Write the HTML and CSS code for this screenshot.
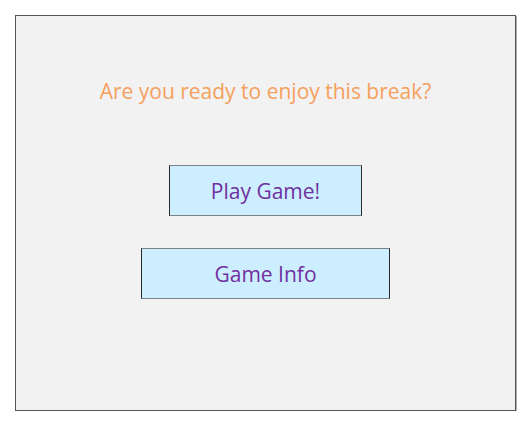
FILE: index.html
```html
<!DOCTYPE html>
<html>
<head>
<meta charset="utf-8">
<link rel="stylesheet" href="styles.css">
</head>
<body>
<div class="frame">
  <p class="title">Are you ready to enjoy this break?</p>
  <div class="buttons">
    <button class="btn btn-play">Play Game!</button>
    <button class="btn btn-info">Game Info</button>
  </div>
</div>
</body>
</html>
```

FILE: styles.css
```css
html, body {
  margin: 0;
  padding: 0;
  background: #ffffff;
}
.frame {
  box-sizing: border-box;
  margin: 15px 0 0 15px;
  width: 501px;
  height: 396px;
  background: #f2f2f2;
  border: 1px solid #555555;
  box-shadow: 1px 1px 0 #b0b0b0;
  display: flex;
  flex-direction: column;
  align-items: center;
  font-family: "Open Sans", "Noto Sans", sans-serif;
}
.title {
  margin: 62px 0 0 0;
  font-size: 21px;
  line-height: 26px;
  color: #f5a05c;
}
.buttons {
  margin-top: 61px;
  display: flex;
  flex-direction: column;
  align-items: center;
  gap: 32px;
}
.btn {
  box-sizing: border-box;
  height: 51px;
  background: #cceeff;
  border: 1px solid #2a2a2a;
  border-top-color: #7a8288;
  border-bottom-color: #7a8288;
  font-family: inherit;
  font-size: 21px;
  color: #7030a0;
  padding: 0;
}
.btn-play { width: 193px; }
.btn-info { width: 249px; }
```
